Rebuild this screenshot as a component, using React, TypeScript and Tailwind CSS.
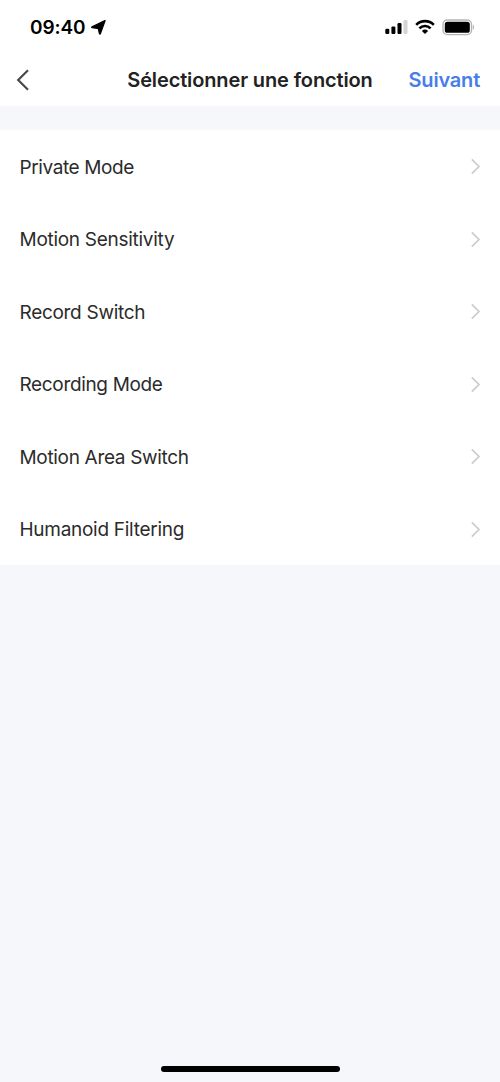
import React from 'react';

type Feature = {
  id: string;
  label: string;
  tracking: string;
};

const features: Feature[] = [
  { id: 'private', label: 'Private Mode', tracking: 'tracking-[-0.4px]' },
  { id: 'sensitivity', label: 'Motion Sensitivity', tracking: 'tracking-[-0.28px]' },
  { id: 'record', label: 'Record Switch', tracking: 'tracking-[-0.3px]' },
  { id: 'recording', label: 'Recording Mode', tracking: 'tracking-[-0.34px]' },
  { id: 'area', label: 'Motion Area Switch', tracking: 'tracking-[-0.32px]' },
  { id: 'humanoid', label: 'Humanoid Filtering', tracking: 'tracking-[-0.28px]' },
];

const StatusBar = () => (
  <div className="flex h-[54px] items-center justify-between pl-[30px] pr-[25px] text-black">
    <div className="flex items-center gap-[6px] pt-px">
      <span className="text-[19px] leading-6 font-semibold tracking-[-0.1px]">09:40</span>
      <svg width="15" height="15" viewBox="0 0 15 15">
        <path
          d="M14.1.8 9.4 13.8Q9 14.7 8.4 13.8L7.4 9.2Q7.2 8.5 6.5 8.4L1 7.8Q.3 7.3 1 6.7L13.4.7Q14.4.2 14.1.8Z"
          fill="currentColor"
          stroke="currentColor"
          strokeWidth="1.1"
          strokeLinejoin="round"
        />
      </svg>
    </div>
    <div className="flex items-center">
      <svg width="23" height="16" viewBox="0 0 23 16">
        <rect x="0.3" y="9.8" width="4" height="5.2" rx="1.2" />
        <rect x="6.4" y="7.4" width="4" height="7.6" rx="1.2" />
        <rect x="12.5" y="4" width="4" height="11" rx="1.2" />
        <rect x="18.5" y="1" width="4" height="14" rx="1.2" fill="#d4d4d4" />
      </svg>
      <svg width="20" height="16" viewBox="0 0 20 16" className="ml-[7px]">
        <g fill="none" stroke="currentColor" strokeWidth="2.6">
          <path d="M1.2 5.8a12.4 12.4 0 0 1 17.6 0" />
          <path d="M4.4 9.3a7.9 7.9 0 0 1 11.2 0" />
        </g>
        <path d="M10 15 6.9 11.9a4.4 4.4 0 0 1 6.2 0Z" />
      </svg>
      <svg width="33" height="17" viewBox="0 0 33 17" className="ml-[7px]">
        <rect x="1" y="1" width="28.5" height="14.6" rx="4.4" fill="none" stroke="#b5b5b5" strokeWidth="1.4" />
        <rect x="2.8" y="2.8" width="25" height="11" rx="2.6" />
        <path d="M30.8 5.8c1.7.5 1.7 4.5 0 5Z" fill="#b5b5b5" />
      </svg>
    </div>
  </div>
);

const Header = () => (
  <header className="grid h-[52px] grid-cols-[1fr_auto_1fr] items-center px-4">
    <button type="button" aria-label="Retour">
      <svg width="14" height="22" viewBox="0 0 14 22" fill="none">
        <path d="M12 1.2 2.2 11 12 20.8" stroke="#4b4b4b" strokeWidth="2.2" />
      </svg>
    </button>
    <h1 className="text-[20px] font-semibold tracking-[-0.13px] text-[#222222]">
      Sélectionner une fonction
    </h1>
    <button type="button" className="mr-1 justify-self-end text-[20px] font-semibold tracking-[-0.2px] text-[#477ee8]">
      Suivant
    </button>
  </header>
);

const FeatureRow = ({ feature }: { feature: Feature }) => (
  <li className="flex h-[72.5px] items-center justify-between pl-[19.5px] pr-[19px]">
    <span className={`pt-[2px] text-[19px] leading-6 text-[#2b2b2b] ${feature.tracking}`}>{feature.label}</span>
    <svg width="11" height="17" viewBox="0 0 11 17" fill="none">
      <path d="m1.8 1.3 7.2 7.2-7.2 7.2" stroke="#cccccc" strokeWidth="1.7" />
    </svg>
  </li>
);

const App = () => {
  return (
    <div className="flex h-[1082px] w-[500px] flex-col bg-[#f5f7fb] font-['Inter',sans-serif]">
      <div className="bg-white">
        <StatusBar />
        <Header />
      </div>
      <ul className="mt-6 bg-white pt-[0.4px]">
        {features.map((feature) => (
          <FeatureRow key={feature.id} feature={feature} />
        ))}
      </ul>
      <div className="mx-auto mt-auto mb-[10px] h-[6px] w-[179px] rounded-full bg-black" />
    </div>
  );
};

export default App;
